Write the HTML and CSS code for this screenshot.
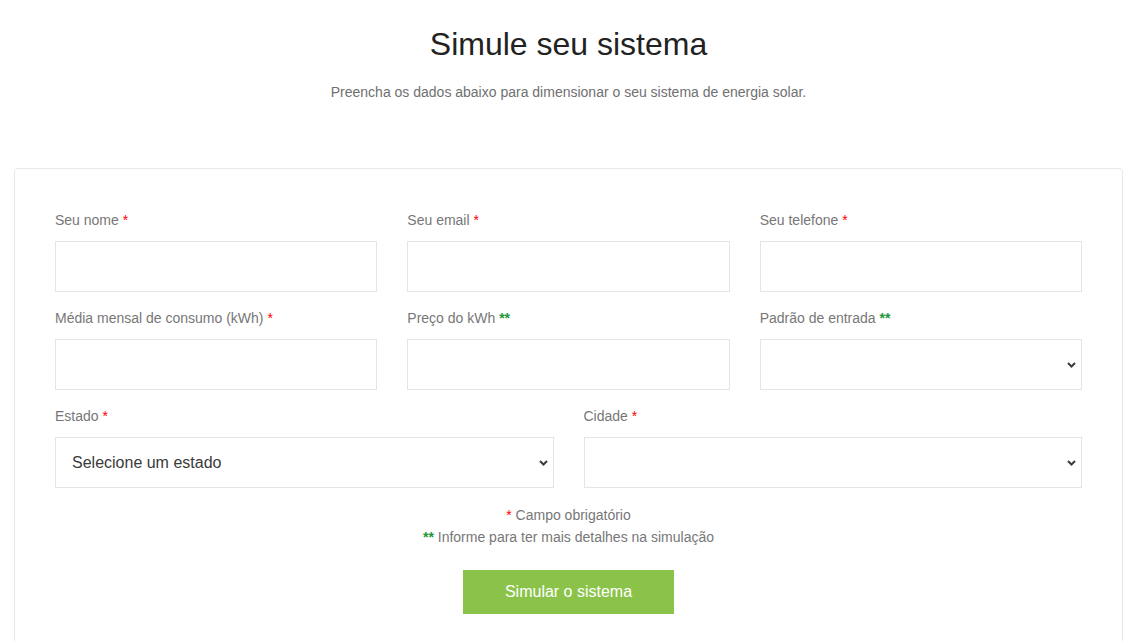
FILE: index.html
```html
<!DOCTYPE html>
<html lang="pt-BR">
<head>
<meta charset="utf-8">
<title>Simule seu sistema</title>
<link rel="stylesheet" href="styles.css">
</head>
<body>
<header class="intro">
  <h1 class="intro-title">Simule seu sistema</h1>
  <p class="intro-text">Preencha os dados abaixo para dimensionar o seu sistema de energia solar.</p>
</header>
<main class="card">
  <form class="form">
    <div class="grid grid-3">
      <div class="field">
        <label class="label">Seu nome <span class="req">*</span></label>
        <input class="control" type="text">
      </div>
      <div class="field">
        <label class="label">Seu email <span class="req">*</span></label>
        <input class="control" type="email">
      </div>
      <div class="field">
        <label class="label">Seu telefone <span class="req">*</span></label>
        <input class="control" type="tel">
      </div>
      <div class="field">
        <label class="label">Média mensal de consumo (kWh) <span class="req">*</span></label>
        <input class="control" type="text">
      </div>
      <div class="field">
        <label class="label">Preço do kWh <span class="opt">**</span></label>
        <input class="control" type="text">
      </div>
      <div class="field">
        <label class="label">Padrão de entrada <span class="opt">**</span></label>
        <div class="select"><span class="select-value"></span><svg class="chev" width="9" height="6" viewBox="0 0 9 6"><path d="M1 1 L4.5 4.5 L8 1" fill="none" stroke="#3c3c3c" stroke-width="2"/></svg></div>
      </div>
    </div>
    <div class="grid grid-2">
      <div class="field">
        <label class="label">Estado <span class="req">*</span></label>
        <div class="select"><span class="select-value">Selecione um estado</span><svg class="chev" width="9" height="6" viewBox="0 0 9 6"><path d="M1 1 L4.5 4.5 L8 1" fill="none" stroke="#3c3c3c" stroke-width="2"/></svg></div>
      </div>
      <div class="field">
        <label class="label">Cidade <span class="req">*</span></label>
        <div class="select"><span class="select-value"></span><svg class="chev" width="9" height="6" viewBox="0 0 9 6"><path d="M1 1 L4.5 4.5 L8 1" fill="none" stroke="#3c3c3c" stroke-width="2"/></svg></div>
      </div>
    </div>
    <div class="notes">
      <p class="note"><span class="req">*</span> Campo obrigatório</p>
      <p class="note"><span class="opt">**</span> Informe para ter mais detalhes na simulação</p>
    </div>
    <div class="actions">
      <button class="btn" type="button">Simular o sistema</button>
    </div>
  </form>
</main>
</body>
</html>
```

FILE: styles.css
```css
* { box-sizing: border-box; }
html, body { margin: 0; padding: 0; background: #fff; }
body {
  font-family: "Liberation Sans", Arial, sans-serif;
  color: #777;
}
.intro {
  text-align: center;
  padding: 24px 7px 0 14px;
}
.intro-title {
  margin: 0;
  font-size: 32px;
  font-weight: 400;
  line-height: 40px;
  color: #222;
}
.intro-text {
  margin: 19px 0 0;
  font-size: 14px;
  line-height: 18px;
  color: #707070;
}
.card {
  margin: 67px 7px 0 14px;
  border: 1px solid #e8e8e8;
  border-radius: 4px;
  padding: 41px 40px 40px 40px;
  min-height: 500px;
}
.form { display: flex; flex-direction: column; }
.grid {
  display: grid;
  column-gap: 30px;
  row-gap: 16px;
}
.grid-3 { grid-template-columns: repeat(3, 1fr); }
.grid-2 { grid-template-columns: repeat(2, 1fr); margin-top: 16px; }
.field { display: flex; flex-direction: column; }
.label {
  font-size: 14px;
  line-height: 20px;
  color: #777;
  margin-bottom: 11px;
}
.req { color: #f00; }
.opt { color: #22973a; font-weight: 700; }
.control {
  height: 51px;
  border: 1px solid #e5e5e5;
  border-radius: 0;
  background: #fff;
  font: inherit;
  padding: 0 16px;
  outline: none;
}
.select {
  height: 51px;
  border: 1px solid #e5e5e5;
  display: flex;
  align-items: center;
  justify-content: space-between;
  padding: 0 5px 0 16px;
}
.select-value {
  font-size: 16px;
  color: #3a3a3a;
}
.chev { flex: none; }
.notes {
  margin-top: 16px;
  text-align: center;
}
.note {
  margin: 0;
  font-size: 14px;
  line-height: 22px;
  color: #777;
}
.actions {
  display: flex;
  justify-content: center;
  margin-top: 22px;
}
.btn {
  width: 211px;
  height: 44px;
  border: 0;
  border-radius: 0;
  background: #8bc34a;
  color: #fff;
  font-family: inherit;
  font-size: 16px;
  cursor: pointer;
}
```
